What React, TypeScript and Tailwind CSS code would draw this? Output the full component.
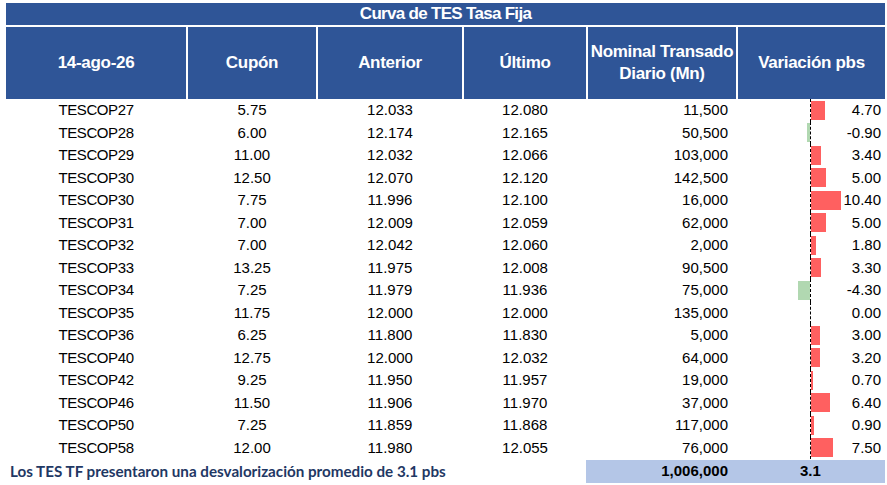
const rows: [string, string, string, string, string, number][] = [
  ["TESCOP27", "5.75", "12.033", "12.080", "11,500", 4.7],
  ["TESCOP28", "6.00", "12.174", "12.165", "50,500", -0.9],
  ["TESCOP29", "11.00", "12.032", "12.066", "103,000", 3.4],
  ["TESCOP30", "12.50", "12.070", "12.120", "142,500", 5.0],
  ["TESCOP30", "7.75", "11.996", "12.100", "16,000", 10.4],
  ["TESCOP31", "7.00", "12.009", "12.059", "62,000", 5.0],
  ["TESCOP32", "7.00", "12.042", "12.060", "2,000", 1.8],
  ["TESCOP33", "13.25", "11.975", "12.008", "90,500", 3.3],
  ["TESCOP34", "7.25", "11.979", "11.936", "75,000", -4.3],
  ["TESCOP35", "11.75", "12.000", "12.000", "135,000", 0.0],
  ["TESCOP36", "6.25", "11.800", "11.830", "5,000", 3.0],
  ["TESCOP40", "12.75", "12.000", "12.032", "64,000", 3.2],
  ["TESCOP42", "9.25", "11.950", "11.957", "19,000", 0.7],
  ["TESCOP46", "11.50", "11.906", "11.970", "37,000", 6.4],
  ["TESCOP50", "7.25", "11.859", "11.868", "117,000", 0.9],
  ["TESCOP58", "12.00", "11.980", "12.055", "76,000", 7.5],
];

const cols = "grid grid-cols-[180px_128px_144px_122px_148px_147px] gap-x-[2px]";
const scale = 2.9;

function VarCell({ v }: { v: number }) {
  return (
    <div className="flex h-full items-center">
      <div className="flex h-full w-[72px] items-center justify-end">
        {v < 0 && <div className="h-[19px] bg-[#b1d8b1]" style={{ width: -v * scale }} />}
      </div>
      <div className="flex h-full flex-1 items-center justify-between border-l border-dashed border-black pr-[4px]">
        <div className="h-[19px] bg-[#ff6060]" style={{ width: v > 0 ? v * scale : 0 }} />
        <span>{v.toFixed(2)}</span>
      </div>
    </div>
  );
}

export default function App() {
  return (
    <div className="min-h-screen bg-white pl-[6px] pt-[3px] font-['Liberation_Sans',Arial,sans-serif]">
      <div className="w-[879px]">
        {/* Title */}
        <div className="flex h-[22px] items-center justify-center bg-[#2f5597] text-[17px] font-bold tracking-[-0.7px] text-white">
          Curva de TES Tasa Fija
        </div>
        <div className={`${cols} mt-[2px] h-[72px] text-[17px] font-bold tracking-[-0.3px] text-white`}>
          {["14-ago-26", "Cupón", "Anterior", "Último"].map((h) => (
            <div key={h} className="flex items-center justify-center bg-[#2f5597]">
              {h}
            </div>
          ))}
          <div className="flex flex-col items-center justify-center bg-[#2f5597] leading-[22px]">
            <span>Nominal Transado</span>
            <span>Diario (Mn)</span>
          </div>
          <div className="flex items-center justify-center bg-[#2f5597]">Variación pbs</div>
        </div>

        {/* Body */}
        <div className="text-[15px] text-black">
          {rows.map(([name, cup, ant, ult, nom, v], i) => (
            <div key={i} className={`${cols} h-[22.5px] items-center`}>
              <div className="text-center tracking-[-0.4px]">{name}</div>
              <div className="text-center">{cup}</div>
              <div className="text-center">{ant}</div>
              <div className="text-center">{ult}</div>
              <div className="pr-[8px] text-right">{nom}</div>
              <VarCell v={v} />
            </div>
          ))}
        </div>

        {/* Footer */}
        <div className="mt-[1px] flex h-[23px] items-center">
          <div className="w-[580px] pl-[4px] font-['Lato',sans-serif] text-[15.2px] font-bold text-[#1f3864]">
            Los TES TF presentaron una desvalorización promedio de 3.1 pbs
          </div>
          <div className="flex h-full flex-1 items-center bg-[#b4c6e7] text-[15px] font-bold text-black">
            <div className="w-[142px] text-right">1,006,000</div>
            <div className="pl-[72px]">3.1</div>
          </div>
        </div>
      </div>
    </div>
  );
}
